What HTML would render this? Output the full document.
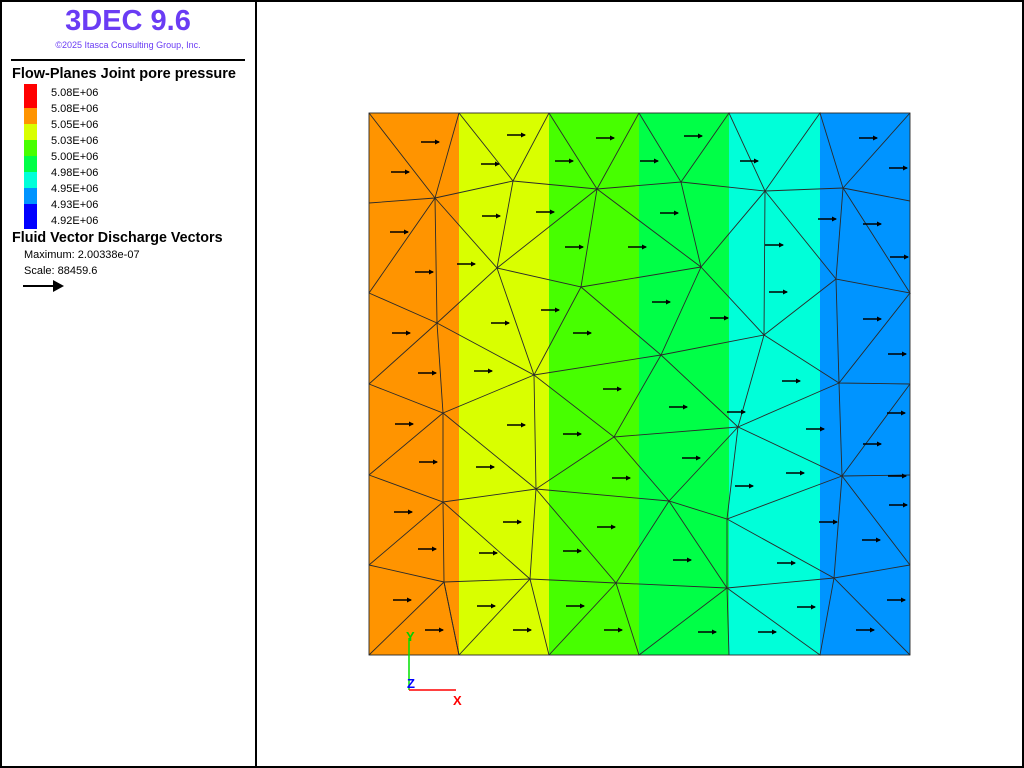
<!DOCTYPE html>
<html><head><meta charset="utf-8"><style>
html,body{margin:0;padding:0;background:#fff;}
body{width:1024px;height:768px;position:relative;overflow:hidden;font-family:"Liberation Sans",sans-serif;}
.frame{position:absolute;left:0;top:0;width:1020px;height:764px;border:2px solid #000;}
.div{position:absolute;left:255px;top:0;width:2px;height:768px;background:#000;}
.t{position:absolute;white-space:nowrap;color:#000;}
</style></head><body>
<div class="frame"></div><div class="div"></div>
<div class="t" style="left:0;width:256px;top:5px;text-align:center;font-size:29px;font-weight:bold;color:#6a3cf4;">3DEC 9.6</div>
<div class="t" style="left:0;width:256px;top:40px;text-align:center;font-size:9px;color:#6a3cf4;">©2025 Itasca Consulting Group, Inc.</div>
<div style="position:absolute;left:11px;top:59px;width:234px;height:2px;background:#000"></div>
<div class="t" style="left:12px;top:66px;font-size:14.5px;font-weight:bold;">Flow-Planes Joint pore pressure</div>
<div style="position:absolute;left:24px;top:84px;width:13px;">
<div style="height:24px;background:#ff0000"></div><div style="height:16px;background:#ff9400"></div><div style="height:16px;background:#d9ff00"></div><div style="height:16px;background:#47ff00"></div><div style="height:16px;background:#00ff47"></div><div style="height:16px;background:#00ffd9"></div><div style="height:16px;background:#0094ff"></div><div style="height:25px;background:#0000ff"></div></div>
<div class="t" style="left:51px;top:85px;font-size:11px;line-height:16px;">5.08E+06<br>5.08E+06<br>5.05E+06<br>5.03E+06<br>5.00E+06<br>4.98E+06<br>4.95E+06<br>4.93E+06<br>4.92E+06</div>
<div class="t" style="left:12px;top:230px;font-size:14.3px;font-weight:bold;">Fluid Vector Discharge Vectors</div>
<div class="t" style="left:24px;top:249px;font-size:11px;">Maximum: 2.00338e-07</div>
<div class="t" style="left:24px;top:265px;font-size:11px;">Scale: 88459.6</div>
<svg style="position:absolute;left:0;top:0" width="1024" height="768">
<defs><marker id="h" viewBox="0 0 10 10" refX="8" refY="5" markerWidth="5" markerHeight="5" orient="auto" markerUnits="userSpaceOnUse"><path d="M0 0L10 5L0 10z" fill="#000"/></marker></defs>
<line x1="23" y1="286" x2="54" y2="286" stroke="#000" stroke-width="2"/><polygon points="53,280 64,286 53,292" fill="#000"/>
<rect x="369" y="113" width="90" height="542" fill="#ff9400"/>
<rect x="459" y="113" width="90" height="542" fill="#d9ff00"/>
<rect x="549" y="113" width="90" height="542" fill="#47ff00"/>
<rect x="639" y="113" width="90" height="542" fill="#00ff47"/>
<rect x="729" y="113" width="91" height="542" fill="#00ffd9"/>
<rect x="820" y="113" width="90" height="542" fill="#0094ff"/>
<g stroke="#2a2a2a" stroke-width="0.9" fill="none">
<rect x="369" y="113" width="541" height="542"/>
<polyline points="369,203 435,198 513,181 597,189 681,182 765,191 843,188 910,201"/>
<polyline points="369,293 437,323 534,375 661,355 764,335 839,383 910,384"/>
<polyline points="369,384 443,413 534,375"/>
<polyline points="443,413 536,489 614,437 738,427 842,476 910,475"/>
<polyline points="369,475 443,502 536,489 669,501 727,519 842,476"/>
<polyline points="369,565 444,582 530,579 616,583 727,588 834,578 910,565"/>
<polyline points="459,113 435,198 437,323 443,413 443,502 444,582 459,655"/>
<polyline points="369,113 435,198 369,293"/>
<polyline points="435,198 497,268 437,323"/>
<polyline points="459,113 513,181 549,113"/>
<polyline points="513,181 497,268 597,189"/>
<polyline points="497,268 581,287 597,189 639,113"/>
<polyline points="549,113 597,189"/>
<polyline points="497,268 534,375 581,287 661,355 701,267 581,287"/>
<polyline points="597,189 701,267 681,182 639,113"/>
<polyline points="681,182 729,113 765,191 701,267 764,335 765,191 820,113 843,188 836,279 765,191"/>
<polyline points="836,279 764,335"/>
<polyline points="843,188 910,113"/>
<polyline points="843,188 910,293 836,279 839,383 910,293"/>
<polyline points="437,323 369,384"/>
<polyline points="661,355 614,437 534,375 536,489"/>
<polyline points="661,355 738,427 764,335"/>
<polyline points="738,427 839,383"/>
<polyline points="738,427 669,501 614,437"/>
<polyline points="738,427 727,519"/>
<polyline points="839,383 842,476 910,384"/>
<polyline points="443,413 369,475"/>
<polyline points="443,502 369,565"/>
<polyline points="536,489 530,579 443,502"/>
<polyline points="536,489 616,583 669,501 727,588 727,519"/>
<polyline points="727,519 834,578 842,476 910,565"/>
<polyline points="444,582 369,655"/>
<polyline points="444,582 459,655"/>
<polyline points="530,579 459,655"/>
<polyline points="530,579 549,655"/>
<polyline points="616,583 549,655"/>
<polyline points="616,583 639,655 727,588 729,655"/>
<polyline points="727,588 820,655 834,578 910,655"/>
</g>
<g stroke="#000" stroke-width="1.5" fill="none" marker-end="url(#h)">
<path d="M421 142h18"/><path d="M391 172h18"/><path d="M390 232h18"/><path d="M415 272h18"/><path d="M392 333h18"/><path d="M418 373h18"/><path d="M395 424h18"/><path d="M419 462h18"/><path d="M394 512h18"/><path d="M418 549h18"/><path d="M393 600h18"/><path d="M425 630h18"/>
<path d="M507 135h18"/><path d="M481 164h18"/><path d="M482 216h18"/><path d="M457 264h18"/><path d="M491 323h18"/><path d="M474 371h18"/><path d="M507 425h18"/><path d="M476 467h18"/><path d="M503 522h18"/><path d="M479 553h18"/><path d="M477 606h18"/><path d="M513 630h18"/>
<path d="M596 138h18"/><path d="M555 161h18"/><path d="M536 212h18"/><path d="M565 247h18"/><path d="M541 310h18"/><path d="M573 333h18"/><path d="M603 389h18"/><path d="M563 434h18"/><path d="M563 551h18"/><path d="M566 606h18"/><path d="M604 630h18"/><path d="M597 527h18"/>
<path d="M684 136h18"/><path d="M640 161h18"/><path d="M660 213h18"/><path d="M628 247h18"/><path d="M652 302h18"/><path d="M710 318h18"/><path d="M669 407h18"/><path d="M682 458h18"/><path d="M673 560h18"/><path d="M698 632h18"/><path d="M612 478h18"/><path d="M735 486h18"/>
<path d="M740 161h18"/><path d="M765 245h18"/><path d="M769 292h18"/><path d="M782 381h18"/><path d="M806 429h18"/><path d="M786 473h18"/><path d="M777 563h18"/><path d="M797 607h18"/><path d="M758 632h18"/><path d="M819 522h18"/><path d="M727 412h18"/>
<path d="M859 138h18"/><path d="M889 168h18"/><path d="M818 219h18"/><path d="M863 224h18"/><path d="M890 257h18"/><path d="M863 319h18"/><path d="M888 354h18"/><path d="M887 413h18"/><path d="M863 444h18"/><path d="M888 476h18"/><path d="M889 505h18"/><path d="M862 540h18"/><path d="M887 600h18"/><path d="M856 630h18"/>
</g>
<line x1="409" y1="690" x2="409" y2="638" stroke="#00e000" stroke-width="1.5"/>
<line x1="409" y1="690" x2="456" y2="690" stroke="#ff0000" stroke-width="1.5"/>
<text x="406" y="641" font-family="Liberation Sans" font-weight="bold" font-size="13" fill="#00d000">Y</text>
<text x="407" y="688" font-family="Liberation Sans" font-weight="bold" font-size="13" fill="#0000ff">Z</text>
<text x="453" y="705" font-family="Liberation Sans" font-weight="bold" font-size="13" fill="#ff0000">X</text>
</svg>
</body></html>
